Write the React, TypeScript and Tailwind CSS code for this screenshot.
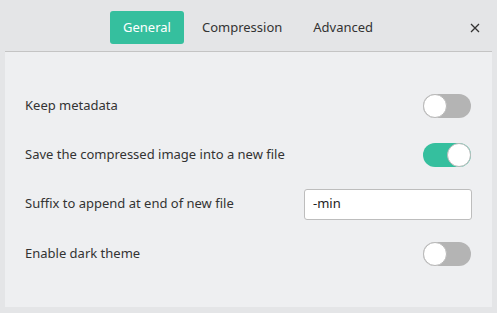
import React from "react";

function Switch({ on }: { on: boolean }) {
  return (
    <div
      className={
        "relative w-[48px] h-[24px] rounded-full " +
        (on ? "bg-[#35bf9e]" : "bg-[#b4b4b4]")
      }
    >
      <div
        className={
          "absolute top-0 w-[24px] h-[24px] rounded-full bg-white border border-[#b9b9b9] " +
          (on ? "right-0" : "left-0")
        }
      />
    </div>
  );
}

export default function App() {
  return (
    <div
      className="w-[497px] h-[313px] bg-[#e4e5e7] text-[#333333] text-[13px]"
      style={{ fontFamily: '"Noto Sans", "Open Sans", sans-serif' }}
    >
      <div className="flex items-center h-[51px] pt-[4px] px-[5px]">
        <div className="flex items-center gap-[5px] ml-[105px]">
          <div className="h-[33px] px-[13px] flex items-center rounded-[3px] bg-[#35bf9e] text-white">
            General
          </div>
          <div className="h-[33px] px-[13px] flex items-center">Compression</div>
          <div className="h-[33px] px-[13px] flex items-center">Advanced</div>
        </div>
        <div className="ml-auto mr-[12px] w-[10px] h-[10px] flex items-center justify-center">
          <svg width="10" height="10" viewBox="0 0 10 10">
            <path d="M1 1L9 9M9 1L1 9" stroke="#333" strokeWidth="1.3" />
          </svg>
        </div>
      </div>
      <div className="mx-[5px] h-[256px] bg-[#eeeff1] border-t border-[#c4c4c4] pt-[29px] pl-[20px] pr-[21px]">
        <div className="flex items-center justify-between h-[49px]">
          <span>Keep metadata</span>
          <Switch on={false} />
        </div>
        <div className="flex items-center justify-between h-[49px]">
          <span>Save the compressed image into a new file</span>
          <Switch on={true} />
        </div>
        <div className="flex items-center justify-between h-[50px]">
          <span>Suffix to append at end of new file</span>
          <div className="w-[168px] h-[31px] mr-[-1px] bg-white border border-[#bdbdbd] rounded-[3px] flex items-center pl-[8px] text-[13px] text-[#222]">
            -min
          </div>
        </div>
        <div className="flex items-center justify-between h-[50px]">
          <span>Enable dark theme</span>
          <Switch on={false} />
        </div>
      </div>
    </div>
  );
}
